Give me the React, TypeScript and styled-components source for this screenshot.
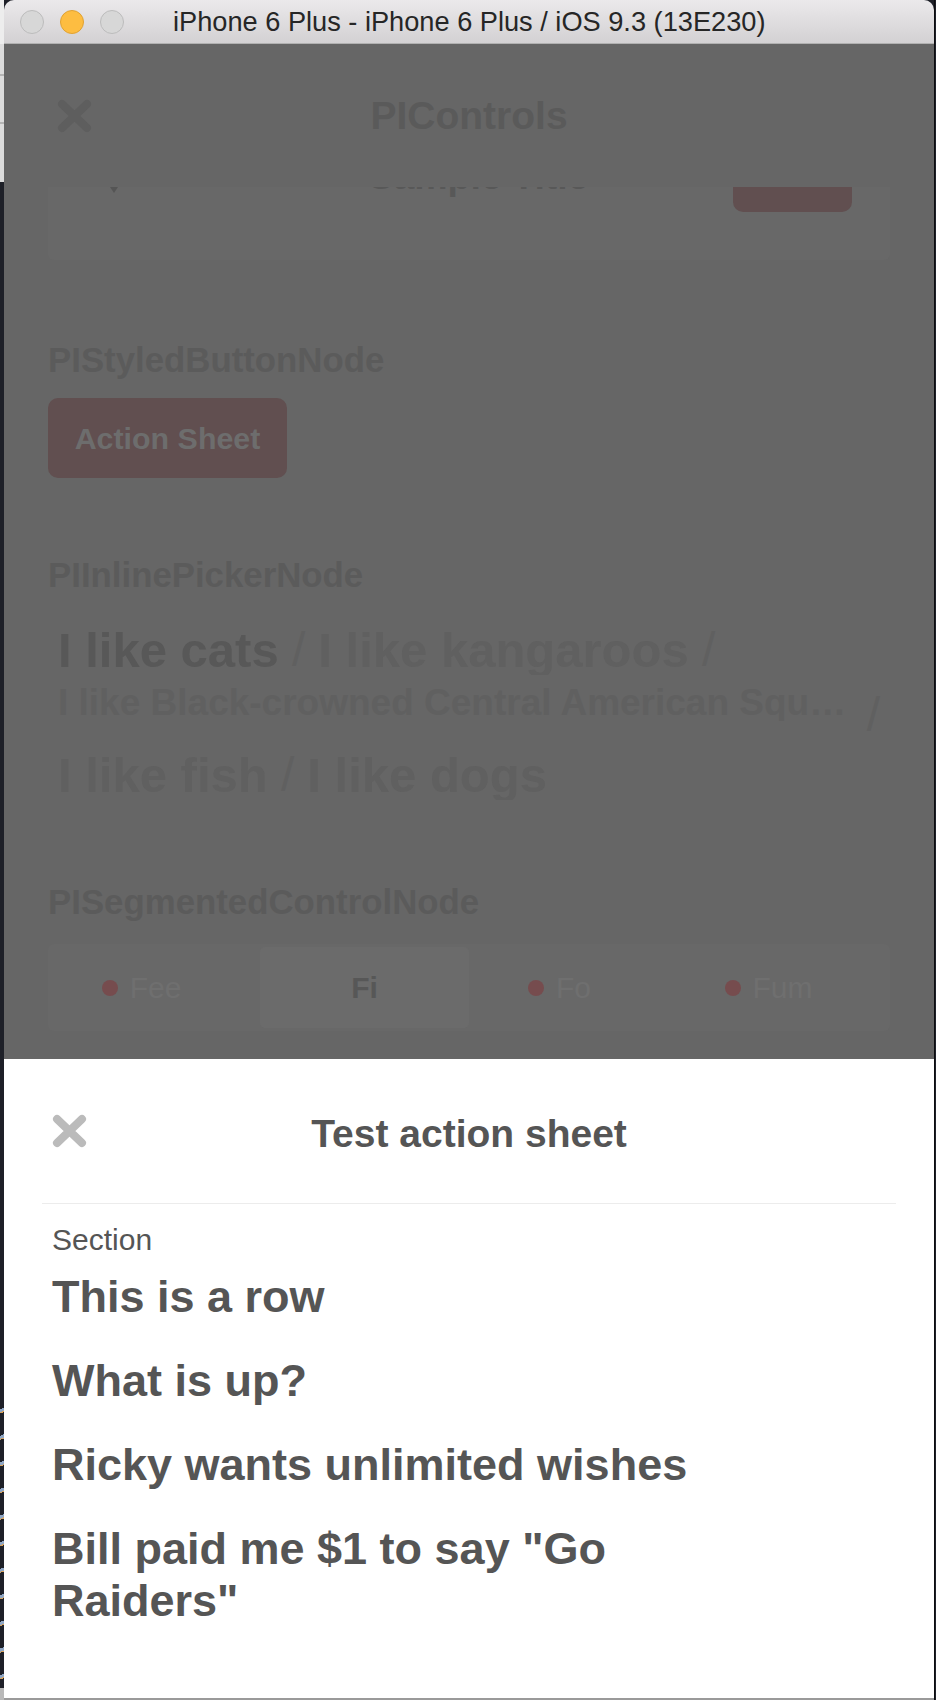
import React from 'react'
import styled, { createGlobalStyle } from 'styled-components'

const options = [
  { label: 'I like cats', selected: true },
  { label: 'I like kangaroos' },
  { label: 'I like Black-crowned Central American Squirrel Monkeys', small: true },
  { label: 'I like fish' },
  { label: 'I like dogs' }
]

const segments = [
  { label: 'Fee', dot: true },
  { label: 'Fi', selected: true },
  { label: 'Fo', dot: true },
  { label: 'Fum', dot: true }
]

const rows = ['This is a row', 'What is up?', 'Ricky wants unlimited wishes', 'Bill paid me $1 to say "Go Raiders"']

const CloseIcon = ({ color }: { color: string }) => (
  <svg width='37' height='36' viewBox='0 0 37 36'>
    <path d='M6 6 L31 30 M31 6 L6 30' stroke={color} strokeWidth='8' strokeLinecap='round' fill='none' />
  </svg>
)

const App = () => {
  return (
    <>
      <GlobalStyle />
      <Desktop>
        <DesktopEdge>
          <EdgePart $h={182} $tone='light' />
          <EdgePart $h={1208} $tone='dark' />
          <EdgePart $h={298} $tone='stripes' />
          <EdgePart $h={12} $tone='gray' />
        </DesktopEdge>

        <Window>
          <TitleBar>
            <Lights>
              <Light />
              <Light $active />
              <Light />
            </Lights>
            <WindowTitle>iPhone 6 Plus - iPhone 6 Plus / iOS 9.3 (13E230)</WindowTitle>
          </TitleBar>

          <Screen>
            <DimmedApp>
              <NavBar>
                <NavRow>
                  <NavClose>
                    <CloseIcon color='#5e5e5e' />
                  </NavClose>
                  <NavTitle>PIControls</NavTitle>
                  <span />
                </NavRow>
              </NavBar>

              <Content>
                <Card>
                  <Chevron width='18' height='14' viewBox='0 0 18 14'>
                    <path d='M1 1 L17 1 L9 13 Z' fill='#555' />
                  </Chevron>
                  <CardTitle>Sample Title</CardTitle>
                  <CardButton>Edit</CardButton>
                </Card>

                <SectionTitle $top={80}>PIStyledButtonNode</SectionTitle>
                <ActionButton>Action Sheet</ActionButton>

                <SectionTitle $top={77}>PIInlinePickerNode</SectionTitle>
                <Picker>
                  {options.map((option, index) => (
                    <PickerOption key={index}>
                      <OptionLabel $small={option.small} $selected={option.selected}>
                        {option.label}
                      </OptionLabel>
                      {index < options.length - 1 && <Separator $small={option.small}> /</Separator>}
                    </PickerOption>
                  ))}
                </Picker>

                <SectionTitle $top={82}>PISegmentedControlNode</SectionTitle>
                <Segmented>
                  {segments.map((segment) => (
                    <Segment key={segment.label} $selected={segment.selected}>
                      {segment.dot && <Dot />}
                      <SegmentLabel $selected={segment.selected}>{segment.label}</SegmentLabel>
                    </Segment>
                  ))}
                </Segmented>
              </Content>
            </DimmedApp>

            <Sheet>
              <SheetHeader>
                <SheetClose>
                  <CloseIcon color='#bbbbbb' />
                </SheetClose>
                <SheetTitle>Test action sheet</SheetTitle>
                <span />
              </SheetHeader>
              <SectionLabel>Section</SectionLabel>
              <RowList>
                {rows.map((row) => (
                  <Row key={row}>{row}</Row>
                ))}
              </RowList>
            </Sheet>
          </Screen>
        </Window>
      </Desktop>
    </>
  )
}

export default App

const GlobalStyle = createGlobalStyle`
  html, body {
    margin: 0;
    padding: 0;
  }
  body {
    background: #1e2028;
    font-family: 'Liberation Sans', Arial, sans-serif;
  }
  * {
    box-sizing: border-box;
  }
`

const Desktop = styled.div`
  display: flex;
  width: 936px;
  height: 1700px;
  overflow: hidden;
`

const DesktopEdge = styled.div`
  width: 4px;
  flex-shrink: 0;
  display: flex;
  flex-direction: column;
`

const edgeTones: Record<string, string> = {
  light: 'linear-gradient(#ededed 0 44px, #dcdcdc 44px 74px, #b4b4b4 74px 76px, #dcdcdc 76px 122px, #b4b4b4 122px 124px, #dcdcdc 124px)',
  dark: '#1e2028',
  stripes: 'repeating-linear-gradient(160deg, #1e2028 0 18px, #8fa6c4 18px 21px, #d9a35c 21px 22px, #1e2028 22px 25px)',
  gray: '#b9b9b9'
}

const EdgePart = styled.div<{ $h: number; $tone: string }>`
  height: ${(p) => p.$h}px;
  background: ${(p) => edgeTones[p.$tone]};
`

const Window = styled.div`
  width: 931px;
  flex-shrink: 0;
  display: flex;
  flex-direction: column;
  border-right: 1px solid #0c0c0f;
`

const TitleBar = styled.div`
  height: 44px;
  flex-shrink: 0;
  display: flex;
  align-items: center;
  padding-left: 16px;
  background: linear-gradient(#ebe9eb, #d3d1d3);
  border-bottom: 1px solid #b1b1b1;
  border-radius: 10px 10px 0 0;
`

const Lights = styled.div`
  display: flex;
  gap: 16px;
`

const Light = styled.span<{ $active?: boolean }>`
  width: 24px;
  height: 24px;
  border-radius: 50%;
  background: ${(p) => (p.$active ? '#fdbd41' : '#d7d7d7')};
  border: 1px solid ${(p) => (p.$active ? '#e0a233' : '#bcbcbc')};
`

const WindowTitle = styled.div`
  margin-left: 49px;
  font-size: 27.2px;
  line-height: 43px;
  color: #262626;
  white-space: nowrap;
`

const Screen = styled.div`
  flex: 1;
  display: flex;
  flex-direction: column;
  border-bottom: 2px solid #9a9a9a;
`

const DimmedApp = styled.div`
  position: relative;
  height: 1015px;
  flex-shrink: 0;
  overflow: hidden;
  background: #666666;
`

const NavBar = styled.div`
  position: absolute;
  top: 0;
  left: 0;
  right: 0;
  height: 143px;
  padding-top: 30px;
  background: #666666;
  z-index: 1;
`

const NavRow = styled.div`
  height: 84px;
  display: grid;
  grid-template-columns: 1fr auto 1fr;
  align-items: center;
`

const NavClose = styled.div`
  padding-left: 52px;
  display: flex;
`

const NavTitle = styled.h1`
  margin: 0;
  font-size: 39px;
  line-height: 46px;
  font-weight: bold;
  color: #5a5a5a;
`

const Content = styled.div`
  padding: 56px 44px 0;
  display: flex;
  flex-direction: column;
  align-items: flex-start;
`

const Card = styled.div`
  align-self: stretch;
  height: 160px;
  display: grid;
  grid-template-columns: 1fr auto 1fr;
  align-items: center;
  padding: 0 38px 0 57px;
  background: #686868;
  border-radius: 6px;
`

const Chevron = styled.svg`
  margin-top: 14px;
`

const CardTitle = styled.div`
  margin-top: -8px;
  font-size: 37.5px;
  line-height: 44px;
  font-weight: bold;
  color: #585858;
`

const CardButton = styled.div`
  justify-self: end;
  align-self: start;
  margin-top: 33px;
  width: 119px;
  height: 79px;
  padding-top: 10px;
  border-radius: 10px;
  background: #614f50;
  color: #6e6e6e;
  font-size: 30px;
  font-weight: bold;
  text-align: center;
`

const SectionTitle = styled.h2<{ $top: number }>`
  margin: ${(p) => p.$top}px 0 0;
  font-size: 34.8px;
  line-height: 40px;
  font-weight: bold;
  color: #5b5b5b;
`

const ActionButton = styled.div`
  margin-top: 18px;
  width: 239px;
  height: 80px;
  border-radius: 10px;
  background: #614f50;
  color: #6d6d6d;
  font-size: 30.4px;
  font-weight: bold;
  display: flex;
  align-items: center;
  justify-content: center;
`

const Picker = styled.div`
  margin-top: 30px;
  align-self: stretch;
  padding: 0 10px 0 10px;
  display: flex;
  flex-wrap: wrap;
  column-gap: 13px;
  row-gap: 10px;
`

const PickerOption = styled.div`
  display: flex;
  align-items: flex-start;
  min-width: 0;
  max-width: 100%;
`

const OptionLabel = styled.span<{ $small?: boolean; $selected?: boolean }>`
  font-size: ${(p) => (p.$small ? 37 : 49)}px;
  line-height: ${(p) => (p.$small ? 36 : 50)}px;
  font-weight: bold;
  color: ${(p) => (p.$selected ? '#585858' : '#606060')};
  white-space: nowrap;
  overflow: hidden;
  text-overflow: ellipsis;
  min-width: 0;
`

const Separator = styled.span<{ $small?: boolean }>`
  flex-shrink: 0;
  padding-top: ${(p) => (p.$small ? 5 : 0)}px;
  font-size: 48px;
  line-height: 50px;
  color: #606060;
  white-space: pre;
`

const Segmented = styled.div`
  margin-top: 22px;
  align-self: stretch;
  height: 87px;
  padding: 3px;
  display: grid;
  grid-template-columns: repeat(4, 1fr);
  background: #686868;
  border-radius: 6px;
`

const Segment = styled.div<{ $selected?: boolean }>`
  display: flex;
  align-items: center;
  justify-content: center;
  gap: 12px;
  border-radius: 5px;
  background: ${(p) => (p.$selected ? '#6b6b6b' : 'transparent')};
`

const Dot = styled.span`
  margin-left: -28px;
  width: 16px;
  height: 16px;
  border-radius: 50%;
  background: #764c4e;
`

const SegmentLabel = styled.span<{ $selected?: boolean }>`
  font-size: 30px;
  font-weight: ${(p) => (p.$selected ? 'bold' : 'normal')};
  color: ${(p) => (p.$selected ? '#575757' : '#6f6f6f')};
`

const Sheet = styled.div`
  flex: 1;
  padding: 0 38px;
  display: flex;
  flex-direction: column;
  background: #ffffff;
`

const SheetHeader = styled.div`
  height: 145px;
  flex-shrink: 0;
  display: grid;
  grid-template-columns: 1fr auto 1fr;
  align-items: center;
  border-bottom: 1px solid #ececec;
`

const SheetClose = styled.div`
  padding-left: 9px;
  display: flex;
`

const SheetTitle = styled.h2`
  margin: 5px 0 0;
  font-size: 39px;
  line-height: 46px;
  font-weight: bold;
  color: #555555;
`

const SectionLabel = styled.div`
  margin-top: 18px;
  padding-left: 10px;
  font-size: 30px;
  line-height: 36px;
  color: #555555;
`

const RowList = styled.div`
  margin-top: 13px;
  padding-left: 10px;
  display: flex;
  flex-direction: column;
  gap: 32px;
`

const Row = styled.div`
  max-width: 680px;
  font-size: 45px;
  line-height: 52px;
  font-weight: bold;
  color: #555555;
`
